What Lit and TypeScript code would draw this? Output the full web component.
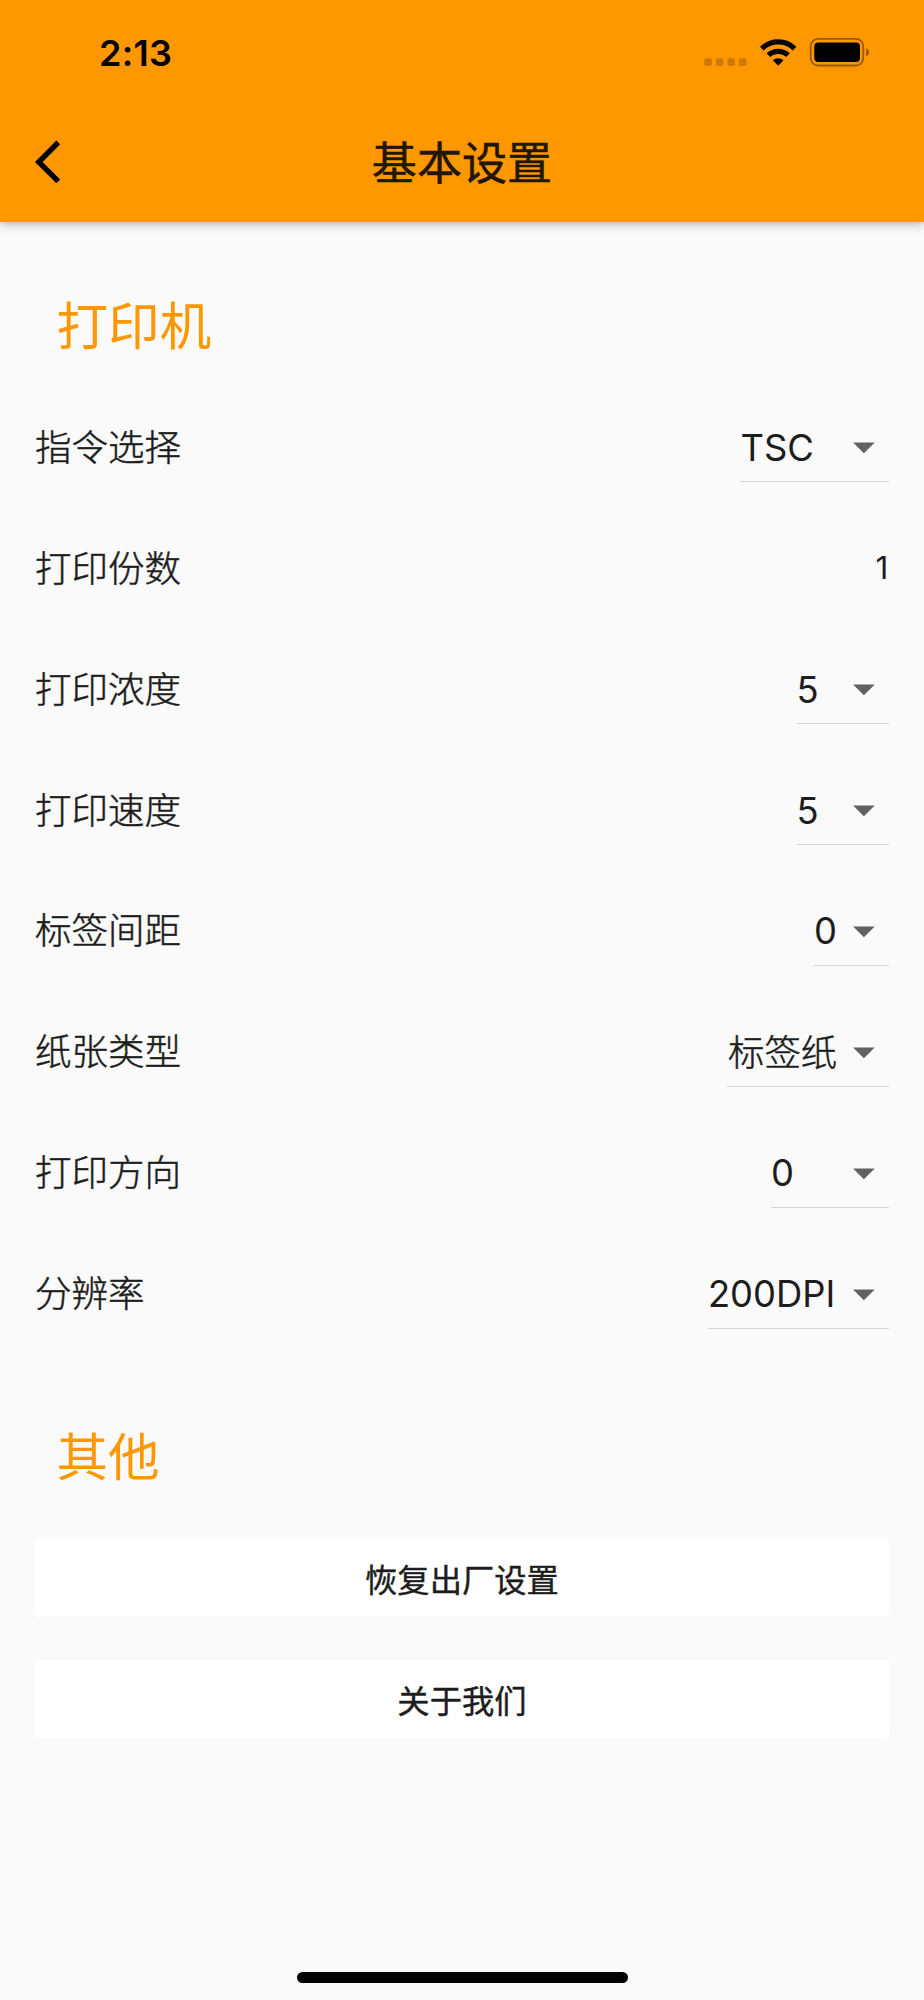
import { LitElement, html, css } from "lit";
import { customElement, property } from "lit/decorators.js";

@customElement("status-bar")
class StatusBar extends LitElement {
  static styles = css`
    :host { display: flex; height: 101.5px; box-sizing: border-box; padding: 4px 54px 0 99px; align-items: center; justify-content: space-between; }
    .time { font: 600 36px/44px Inter, sans-serif; letter-spacing: 0.3px; color: #000; }
    .icons { display: block; width: 166px; height: 30px; }
  `;
  render() {
    return html`
      <span class="time">2:13</span>
      <svg class="icons" viewBox="704 38 166 30">
        <g fill="#000" fill-opacity=".2">
          <rect x="704.3" y="58.3" width="7.6" height="7.6" rx="2" />
          <rect x="715.8" y="58.3" width="7.6" height="7.6" rx="2" />
          <rect x="727.3" y="58.3" width="7.6" height="7.6" rx="2" />
          <rect x="738.8" y="58.3" width="7.6" height="7.6" rx="2" />
        </g>
        <g fill="none" stroke="#000" stroke-width="5.2">
          <path d="M761.8 48.6a23.5 23.5 0 0 1 32.8 0" />
          <path d="M768.4 55.2a14.2 14.2 0 0 1 19.6 0" />
        </g>
        <path d="M772.9 60.2a8 8 0 0 1 10.6 0L778.2 65.7z" fill="#000" />
        <rect x="810.7" y="38.9" width="52.6" height="26.6" rx="7.4" fill="none" stroke="#000" stroke-opacity=".4" stroke-width="1.8" />
        <rect x="814.3" y="42.5" width="45.7" height="19.6" rx="4" fill="#000" />
        <path d="M866.2 48.2q2.8 1.4 2.8 4t-2.8 4z" fill="#000" fill-opacity=".45" />
      </svg>
    `;
  }
}

@customElement("setting-row")
class SettingRow extends LitElement {
  @property() label = "";
  @property() value = "";
  @property({ type: Number }) width = 0;
  static styles = css`
    :host { display: flex; height: 120.9px; align-items: center; justify-content: space-between; }
    .label { padding: 0 0 0 0.6px; font-size: 36.5px; line-height: 52px; font-weight: 300; -webkit-text-stroke: 0.5px #1d1d1d; }
    .plain { padding: 0 1px 1px 0; font-size: 31.5px; line-height: 52px; font-weight: 370; }
    .select { display: flex; box-sizing: border-box; height: 69px; align-items: center; justify-content: space-between; border-bottom: 1px solid #d4d4d4; font-size: 36.4px; line-height: 52px; white-space: nowrap; }
    .value { padding-top: 1px; font-family: Inter, sans-serif; font-weight: 370; }
    .value.cjk { padding: 0 0 4px 0.6px; font-family: "Noto Sans CJK SC", sans-serif; font-weight: 300; -webkit-text-stroke: 0.5px #1d1d1d; }
    .arrow { width: 51.8px; height: 51.8px; flex: none; fill: #616161; }
  `;
  render() {
    const cjk = /[\u4e00-\u9fff]/.test(this.value);
    return html`
      <span class="label">${this.label}</span>
      ${this.width
        ? html`<div class="select" style="width:${this.width}px">
            <span class=${cjk ? "value cjk" : "value"}>${this.value}</span>
            <svg class="arrow" viewBox="0 0 24 24"><path d="M7 10l5 5 5-5z" /></svg>
          </div>`
        : html`<span class="plain">${this.value}</span>`}
    `;
  }
}

const SETTINGS = [
  { label: "指令选择", value: "TSC", width: 149 },
  { label: "打印份数", value: "1", width: 0 },
  { label: "打印浓度", value: "5", width: 92.8 },
  { label: "打印速度", value: "5", width: 92.8 },
  { label: "标签间距", value: "0", width: 75.5 },
  { label: "纸张类型", value: "标签纸", width: 162 },
  { label: "打印方向", value: "0", width: 118.5 },
  { label: "分辨率", value: "200DPI", width: 181.5 },
];

@customElement("app-root")
class AppRoot extends LitElement {
  static styles = css`
    :host { display: flex; flex-direction: column; box-sizing: border-box; height: 2000px; background: #fafafa; color: #1d1d1d; font-family: Inter, "Noto Sans CJK SC", sans-serif; }
    .header { flex: none; height: 222.4px; background: #ff9800; box-shadow: 0 4px 9px rgba(0, 0, 0, 0.18), 0 1px 4px rgba(0, 0, 0, 0.1); }
    .nav { display: grid; grid-template-columns: 120px 1fr 120px; height: 120.9px; align-items: center; }
    .back { width: 51.8px; height: 51.8px; margin-left: 35px; fill: #000; }
    .title { margin: 0; padding-top: 4px; text-align: center; font-size: 45.1px; line-height: 60px; font-weight: 400; -webkit-text-stroke: 0.5px #211600; color: #211600; }
    .content { flex: 1; padding: 0 34.6px 0 34.5px; }
    .section { margin: 0; font-size: 51.6px; line-height: 72px; font-weight: 400; color: #ff9800; }
    .printer { padding: 67.5px 0 25.5px 22px; }
    .other { padding: 66px 0 46.5px 22px; }
    .buttons { display: flex; flex-direction: column; gap: 43.2px; }
    .button { height: 77.7px; border: 0; border-radius: 4.3px; background: #fff; color: #1d1d1d; font: 400 32.3px/46px "Noto Sans CJK SC", sans-serif; -webkit-text-stroke: 0.4px #1d1d1d; padding: 0; }
    .home { flex: none; align-self: center; width: 331px; height: 11px; border-radius: 6px; background: #000; margin-bottom: 17.5px; }
  `;
  render() {
    return html`
      <header class="header">
        <status-bar></status-bar>
        <div class="nav">
          <svg class="back" viewBox="0 0 24 24"><path d="M11.67 3.87L9.9 2.1 0 12l9.9 9.9 1.77-1.77L3.54 12z" /></svg>
          <h1 class="title">基本设置</h1>
        </div>
      </header>
      <main class="content">
        <h2 class="section printer">打印机</h2>
        ${SETTINGS.map((s) => html`<setting-row .label=${s.label} .value=${s.value} .width=${s.width}></setting-row>`)}
        <h2 class="section other">其他</h2>
        <div class="buttons">
          <button class="button">恢复出厂设置</button>
          <button class="button">关于我们</button>
        </div>
      </main>
      <div class="home"></div>
    `;
  }
}
